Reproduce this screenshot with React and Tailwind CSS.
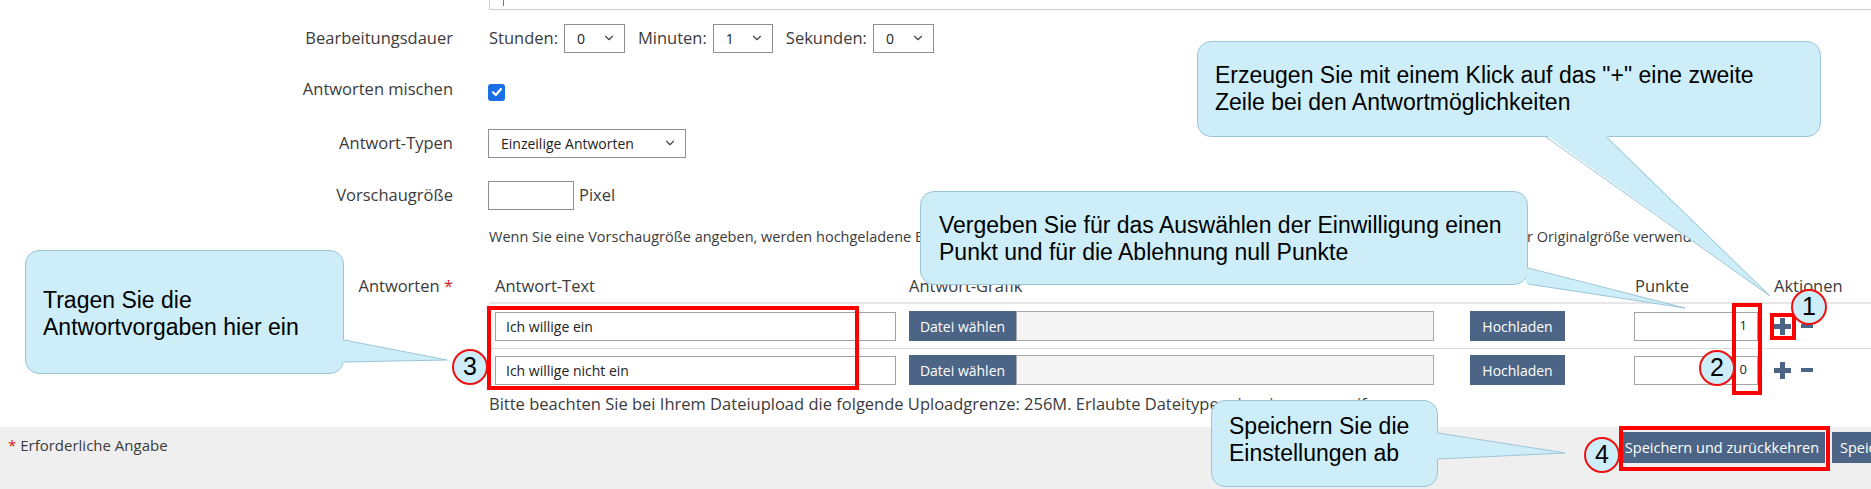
import React from 'react';
import { ChevronDown } from 'lucide-react';

const Select = ({ value, className }) => (
  <div className={`flex h-[29px] items-center justify-between border border-[#8f8f8f] bg-white pl-[12px] pr-[8px] text-[14px] text-[#222] ${className}`}>
    <span>{value}</span>
    <ChevronDown size={14} strokeWidth={2} className="text-[#444]" />
  </div>
);

const Label = ({ children }) => (
  <div className="w-[453px] shrink-0 text-right text-[16.5px] leading-[22px] text-[#3b3b3b]">{children}</div>
);

const Callout = ({ className, children }) => (
  <div className={`absolute rounded-[14px] border border-[#9cc5d6] bg-[#cdeef9] font-['Liberation_Sans',Arial,sans-serif] text-[23px] leading-[27px] text-black ${className}`}>
    {children}
  </div>
);

const Circle = ({ n, className }) => (
  <div className={`absolute flex h-[36px] w-[36px] items-center justify-center rounded-full border-2 border-[#ee1111] bg-[#cdeef9] font-['Liberation_Sans',Arial,sans-serif] text-[25px] text-black ${className}`}>
    {n}
  </div>
);

const PlusMinus = () => (
  <div className="ml-[16px] flex items-center">
    <svg width="17" height="17" viewBox="0 0 17 17">
      <rect x="6" y="0" width="5" height="17" fill="#4c6586" />
      <rect x="0" y="6" width="17" height="5" fill="#4c6586" />
    </svg>
    <svg width="12" height="5" viewBox="0 0 12 5" className="ml-[10px]">
      <rect x="0" y="0" width="12" height="4" fill="#4c6586" />
    </svg>
  </div>
);

const AnswerRow = ({ text, points, last }) => (
  <div className={`flex items-center pl-[6px] ${last ? 'h-[42px]' : 'h-[45px] border-b border-[#dddddd]'}`}>
    <div className="flex h-[29px] w-[401px] items-center border border-[#a3a3a3] pl-[10px] text-[14px] text-[#222]">{text}</div>
    <div className="ml-[13px] flex h-[30px]">
      <div className="flex w-[107px] items-center justify-center bg-[#4c6586] text-[14px] text-white">Datei wählen</div>
      <div className="w-[418px] border border-[#a9a9a9] bg-[#f4f4f4]" />
    </div>
    <div className="ml-[36px] flex h-[30px] w-[95px] items-center justify-center bg-[#4c6586] text-[14px] text-white">Hochladen</div>
    <div className="ml-[69px] flex h-[29px] w-[124px] items-center justify-end border border-[#a3a3a3] pr-[10px] text-[13px] text-[#222]">{points}</div>
    <PlusMinus />
  </div>
);

export default function App() {
  return (
    <div className="relative flex h-[489px] w-full flex-col overflow-hidden bg-white font-['Open_Sans',sans-serif]">
      <div className="flex-1">
        {/* cut-off field above */}
        <div className="pl-[489px]">
          <div className="-mr-[4px] flex h-[10px] border border-t-0 border-[#cfcfcf] pl-[13px]">
            <div className="h-[6px] w-px bg-[#777]" />
          </div>
        </div>

        <div className="flex h-[56px] items-center">
          <Label>Bearbeitungsdauer</Label>
          <div className="ml-[36px] flex items-center text-[16.5px] text-[#3b3b3b]">
            <span>Stunden:</span>
            <Select value="0" className="ml-[6px] w-[61px]" />
            <span className="ml-[13px]">Minuten:</span>
            <Select value="1" className="ml-[6px] w-[60px]" />
            <span className="ml-[13px]">Sekunden:</span>
            <Select value="0" className="ml-[6px] w-[61px]" />
          </div>
        </div>

        <div className="flex h-[46px] items-center">
          <Label>Antworten mischen</Label>
          <div className="ml-[35px] mt-[6px] flex h-[17px] w-[17px] items-center justify-center rounded-[3px] bg-[#1a6ee6]">
            <svg width="12" height="12" viewBox="0 0 12 12">
              <path d="M2 6.3 L4.8 9 L10 3" fill="none" stroke="white" strokeWidth="2.2" strokeLinecap="round" strokeLinejoin="round" />
            </svg>
          </div>
        </div>

        <div className="flex h-[62px] items-center">
          <Label>Antwort-Typen</Label>
          <Select value="Einzeilige Antworten" className="ml-[35px] w-[198px]" />
        </div>

        <div className="flex h-[42px] items-center">
          <Label>Vorschaugröße</Label>
          <div className="ml-[35px] h-[29px] w-[86px] border border-[#8f8f8f]" />
          <span className="ml-[5px] text-[16.5px] text-[#3b3b3b]">Pixel</span>
        </div>

        <div className="flex h-[38px] items-center pl-[489px] pt-[4px] text-[14.5px] leading-[20px] text-[#3b3b3b]">
          Wenn Sie eine Vorschaugröße angeben, werden hochgeladene Bilder automatisch auf die angegebene Größe skaliert. Ansonsten werden die Bilder in ihrer Originalgröße verwendet.
        </div>

        <div className="flex">
          <div className="pt-[21px]">
            <Label>
              Antworten <span className="text-[#cc2222]">*</span>
            </Label>
          </div>
          <div className="ml-[36px] flex-1">
            <div className="flex h-[50px] items-end border-b-2 border-[#e6e6e6] pb-[5px] pl-[6px] text-[16.5px] leading-[22px] text-[#3b3b3b]">
              <span className="w-[414px]">Antwort-Text</span>
              <span className="w-[726px]">Antwort-Grafik</span>
              <span className="w-[139px]">Punkte</span>
              <span>Aktionen</span>
            </div>
            <AnswerRow text="Ich willige ein" points="1" />
            <AnswerRow text="Ich willige nicht ein" points="0" last />
            <div className="pt-[2px] text-[16.5px] leading-[22px] text-[#3b3b3b]">
              Bitte beachten Sie bei Ihrem Dateiupload die folgende Uploadgrenze: 256M. Erlaubte Dateitypen: jpg, jpeg, png, gif
            </div>
          </div>
        </div>
      </div>

      {/* footer */}
      <div className="flex h-[62px] shrink-0 items-start bg-[#efefef]">
        <div className="w-[1619px] shrink-0 pl-[8px] pt-[8px] text-[15px] leading-[20px] text-[#3b3b3b]">
          <span className="text-[#cc2222]">*</span> Erforderliche Angabe
        </div>
        <div className="mt-[5px] flex shrink-0 gap-[7px]">
          <div className="flex h-[31px] w-[206px] items-center justify-center bg-[#4c6586] text-[14.5px] text-white">Speichern und zurückkehren</div>
          <div className="flex h-[31px] w-[100px] items-center bg-[#4c6586] pl-[8px] text-[14.5px] text-white">Speichern</div>
        </div>
      </div>

      {/* annotations */}
      <div className="absolute left-[487px] top-[306px] h-[84px] w-[372px] border-4 border-[#ff0000]" />
      <div className="absolute left-[1732px] top-[303px] h-[92px] w-[30px] border-4 border-[#ff0000]" />
      <div className="absolute left-[1770px] top-[313px] h-[27px] w-[26px] border-4 border-[#ff0000]" />
      <div className="absolute left-[1619px] top-[426px] h-[45px] w-[211px] border-4 border-[#ff0000]" />

      <Callout className="left-[1197px] top-[41px] h-[96px] w-[624px] pl-[17px] pt-[20px]">
        Erzeugen Sie mit einem Klick auf das "+" eine zweite
        <br />
        Zeile bei den Antwortmöglichkeiten
      </Callout>
      <Callout className="left-[920px] top-[191px] h-[94px] w-[608px] pl-[18px] pt-[20px]">
        Vergeben Sie für das Auswählen der Einwilligung einen
        <br />
        Punkt und für die Ablehnung null Punkte
      </Callout>
      <Callout className="left-[25px] top-[250px] h-[124px] w-[319px] pl-[17px] pt-[36px]">
        Tragen Sie die
        <br />
        Antwortvorgaben hier ein
      </Callout>
      <Callout className="left-[1211px] top-[400px] h-[87px] w-[227px] pl-[17px] pt-[12px]">
        Speichern Sie die
        <br />
        Einstellungen ab
      </Callout>

      <svg className="pointer-events-none absolute left-0 top-0" width="1871" height="489" viewBox="0 0 1871 489">
        <polygon points="1546,135 1606,135 1770,296" fill="#cdeef9" />
        <polyline points="1546,137 1770,296 1606,137" fill="none" stroke="#9cc5d6" strokeWidth="1" />
        <polygon points="1526,268 1526,284 1685,308" fill="#cdeef9" />
        <polyline points="1528,268 1685,308 1528,284" fill="none" stroke="#9cc5d6" strokeWidth="1" />
        <polygon points="342,340 342,362 447,360" fill="#cdeef9" />
        <polyline points="344,340 447,360 344,362" fill="none" stroke="#9cc5d6" strokeWidth="1" />
        <polygon points="1436,433 1436,459 1565,453" fill="#cdeef9" />
        <polyline points="1438,433 1565,453 1438,459" fill="none" stroke="#9cc5d6" strokeWidth="1" />
      </svg>

      <Circle n="1" className="left-[1791px] top-[289px]" />
      <Circle n="2" className="left-[1699px] top-[350px]" />
      <Circle n="3" className="left-[452px] top-[349px]" />
      <Circle n="4" className="left-[1584px] top-[437px]" />
    </div>
  );
}
